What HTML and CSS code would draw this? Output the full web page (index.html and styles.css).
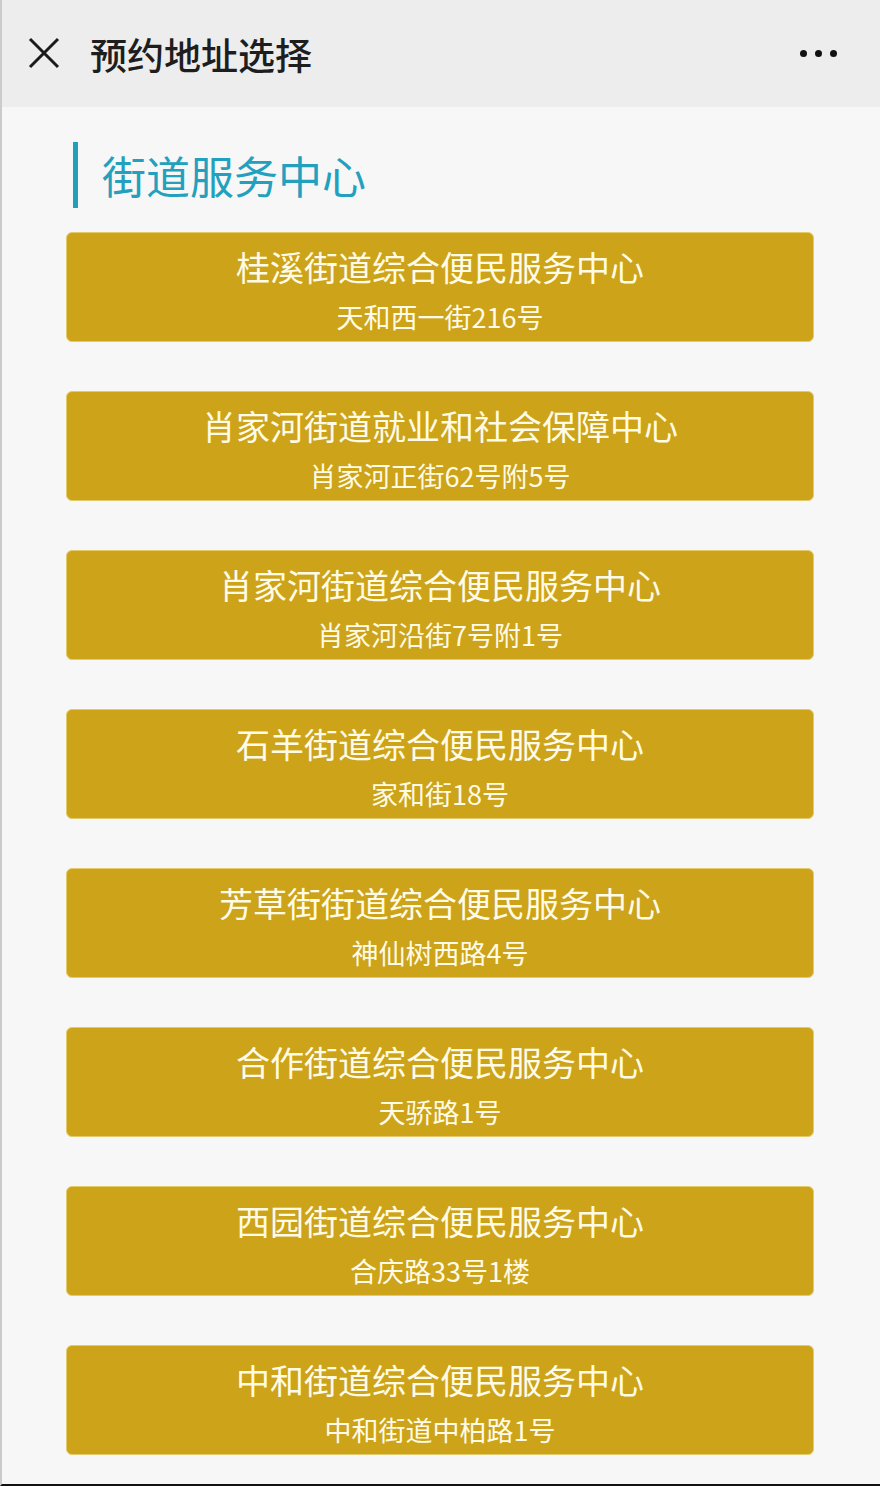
FILE: index.html
```html
<!DOCTYPE html>
<html lang="zh-CN">
<head>
<meta charset="utf-8">
<title>预约地址选择</title>
<link rel="stylesheet" href="styles.css">
</head>
<body>
<div class="page">
  <header class="topbar">
    <svg class="close" viewBox="0 0 32 32" width="32" height="32">
      <path d="M2 2 L30 30 M30 2 L2 30" stroke="#1a1a1a" stroke-width="3" fill="none"/>
    </svg>
    <h1 class="title">预约地址选择</h1>
    <div class="more"><span></span><span></span><span></span></div>
  </header>
  <main class="content">
    <h2 class="section">街道服务中心</h2>
    <ul class="list">
      <li class="card"><div class="name">桂溪街道综合便民服务中心</div><div class="addr">天和西一街216号</div></li>
      <li class="card"><div class="name">肖家河街道就业和社会保障中心</div><div class="addr">肖家河正街62号附5号</div></li>
      <li class="card"><div class="name">肖家河街道综合便民服务中心</div><div class="addr">肖家河沿街7号附1号</div></li>
      <li class="card"><div class="name">石羊街道综合便民服务中心</div><div class="addr">家和街18号</div></li>
      <li class="card"><div class="name">芳草街街道综合便民服务中心</div><div class="addr">神仙树西路4号</div></li>
      <li class="card"><div class="name">合作街道综合便民服务中心</div><div class="addr">天骄路1号</div></li>
      <li class="card"><div class="name">西园街道综合便民服务中心</div><div class="addr">合庆路33号1楼</div></li>
      <li class="card"><div class="name">中和街道综合便民服务中心</div><div class="addr">中和街道中柏路1号</div></li>
    </ul>
  </main>
</div>
</body>
</html>
```

FILE: styles.css
```css
* { box-sizing: border-box; }
html, body { margin: 0; padding: 0; }
body {
  background: #f7f7f8;
  font-family: "Noto Sans CJK SC", "Noto Sans", sans-serif;
}
.page {
  width: 880px;
  height: 1486px;
  border-left: 2px solid #cbcbcb;
  border-bottom: 2px solid #111;
  background: #f7f7f8;
  overflow: hidden;
}
.topbar {
  height: 107px;
  background: #ededed;
  display: flex;
  align-items: center;
  padding: 0 43px 0 26px;
}
.close { flex: none; width: 32px; height: 32px; margin-top: -2px; }
.title {
  margin: 0 0 0 30px;
  font-size: 37px;
  font-weight: 500;
  color: #1e1e1e;
  flex: 1;
  line-height: 48px;
}
.more { display: flex; gap: 8px; }
.more span {
  width: 7px; height: 7px; border-radius: 50%; background: #111;
}
.content { padding: 35px 0 0 64px; }
.section {
  margin: 0 0 24px 7px;
  height: 66px;
  border-left: 5px solid #21a0bc;
  padding-left: 24px;
  font-size: 44px;
  font-weight: 400;
  color: #23a0bd;
  line-height: 66px;
  display: flex;
  align-items: center;
}
.list {
  list-style: none;
  margin: 0;
  padding: 0;
  display: flex;
  flex-direction: column;
  gap: 49px;
}
.card {
  width: 748px;
  height: 110px;
  background: #cca319;
  border: 1px solid #e3cb6c;
  border-radius: 6px;
  color: #fffbe6;
  text-align: center;
  padding-top: 11px;
}
.name { font-size: 34px; line-height: 46px; }
.addr { font-size: 27px; line-height: 36px; margin-top: 9px; }
```
